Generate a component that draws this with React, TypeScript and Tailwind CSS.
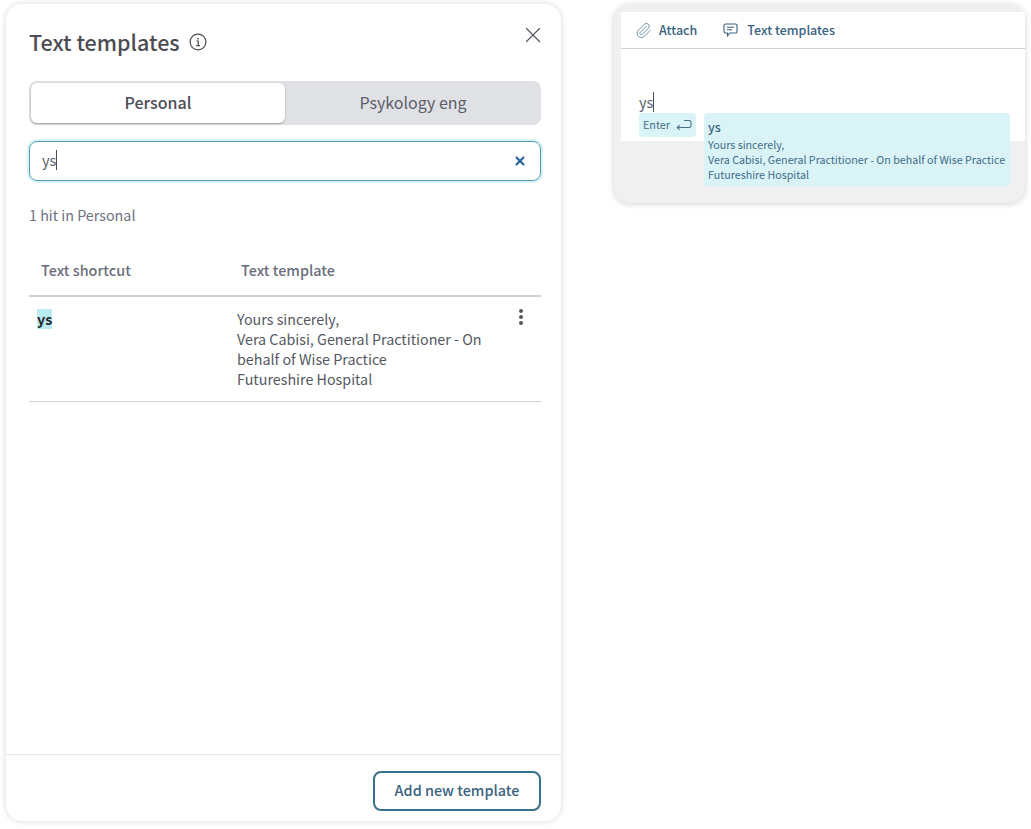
import { Paperclip, X } from "lucide-react";

const font = "font-['Noto_Sans_CJK_SC','Source_Sans_Pro',sans-serif]";

function Caret({ className }: { className: string }) {
  return <span className={`inline-block w-px bg-[#4b4f58] ${className}`} />;
}

function InfoIcon() {
  return (
    <svg viewBox="0 0 18 18" className="w-[18px] h-[18px] text-[#4c4d52]" fill="none" stroke="currentColor">
      <circle cx="9" cy="9" r="7.9" strokeWidth="1.2" />
      <path d="M7.4 8h1.8v4.6M7.2 12.6h3.8" strokeWidth="1.2" />
      <circle cx="8.9" cy="5.6" r="0.9" fill="currentColor" stroke="none" />
    </svg>
  );
}

function EnterIcon() {
  return (
    <svg viewBox="0 0 16 12" className="w-4 h-3" fill="none" stroke="currentColor" strokeWidth="1.1">
      <path d="M8 1.5h5.2a1.8 1.8 0 0 1 1.8 1.8v3.4a1.8 1.8 0 0 1-1.8 1.8H1.2M3.8 6.2 1.2 8.5l2.6 2.3" />
    </svg>
  );
}

function BubbleIcon() {
  return (
    <svg viewBox="0 0 15 14" className="w-[15px] h-[14px]" fill="none" stroke="currentColor" strokeWidth="1.1">
      <path d="M2.5 1h10A1.5 1.5 0 0 1 14 2.500v6A1.500 1.500 0 0 1 12.500 10H7l-2.500 2.800V10h-2A1.500 1.500 0 0 1 1 8.500v-6A1.500 1.500 0 0 1 2.500 1Z" />
      <path d="M4 4.200h7M4 6.800h5" />
    </svg>
  );
}

function TemplatesPanel() {
  return (
    <div className="w-[555px] h-[817px] flex flex-col bg-white rounded-2xl shadow-[0_0_6px_rgba(0,0,0,0.16)]">
      <div className="flex-1 pl-[23px] pr-5">
        {/* Title */}
        <div className="relative h-[77px] pt-6">
          <div className="flex items-center gap-[9px] h-7">
            <h1 className="text-[21.5px] leading-7 font-medium text-[#4c4d52]">Text templates</h1>
            <InfoIcon />
          </div>
          <X className="absolute right-[-5px] top-[18px] w-[26px] h-[26px] text-[#55565b]" strokeWidth={1.1} />
        </div>

        {/* Tabs */}
        <div className="flex h-11 bg-[#e0e1e5] rounded-lg p-[2px] pr-0">
          <div className="w-[254px] flex items-center justify-center pb-[2px] bg-white rounded-md shadow-[0_1px_2px_rgba(0,0,0,0.3)] text-[16px] font-medium text-[#4c4d57]">
            Personal
          </div>
          <div className="flex-1 flex items-center justify-center pb-[2px] text-[16px] text-[#5c5f6a]">
            Psykology eng
          </div>
        </div>

        {/* Search */}
        <div className="mt-4 h-10 flex items-center justify-between pl-3 pr-[13px] rounded-lg border border-[#4a9db3] shadow-[0_0_0_2px_#d9f3f7]">
          <div className="flex items-center pb-[2px] text-[14.5px] text-[#5c5f6a]">
            ys
            <Caret className="h-5" />
          </div>
          <X className="w-[14px] h-[14px] text-[#23609a]" strokeWidth={3.5} />
        </div>

        <p className="mt-6 text-[14.3px] leading-5 text-[#6d7180]">1 hit in Personal</p>

        {/* Table */}
        <div className="mt-[34px] flex h-[22px] text-[14.4px] leading-[22px] font-medium text-[#6a6e7c]">
          <div className="w-[200px] pl-3">Text shortcut</div>
          <div className="pl-3">Text template</div>
        </div>
        <div className="mt-[14px] border-t-2 border-[#cfd0d5]" />
        <div className="flex h-[105px] pt-3 border-b border-[#d3d4d8] text-[14.3px] leading-5">
          <div className="w-[200px] pl-2">
            <span className="inline-block bg-[#b9ebf1] font-semibold text-[#26272b]">ys</span>
          </div>
          <div className="w-[262px] pl-2 text-[#55575f]">
            Yours sincerely,
            <br />
            Vera Cabisi, General Practitioner - On behalf of Wise Practice
            <br />
            Futureshire Hospital
          </div>
          <div className="flex flex-col gap-[2px] ml-[28px]">
            <span className="w-1 h-1 rounded-full bg-[#55575f]" />
            <span className="w-1 h-1 rounded-full bg-[#55575f]" />
            <span className="w-1 h-1 rounded-full bg-[#55575f]" />
          </div>
        </div>
      </div>

      {/* Footer */}
      <div className="h-[67px] flex items-start justify-end pt-4 pr-5 border-t border-[#e6e6e9]">
        <button className="w-[168px] h-10 pb-[2px] rounded-lg border-2 border-[#36708f] text-[14.4px] font-medium text-[#3a6280] bg-white">
          Add new template
        </button>
      </div>
    </div>
  );
}

function ComposerPreview() {
  return (
    <div className="w-[411px] h-[199px] ml-[53px] pt-2 pl-[7px] bg-[#f0f0f0] rounded-2xl shadow-[0_1px_6px_rgba(0,0,0,0.18)]">
      <div className="relative h-[129px] bg-white">
        <div className="h-[37px] flex items-center pl-[14px] border-b border-[#d2d3d8] text-[12.5px] font-medium text-[#3a6280]">
          <Paperclip className="w-[17px] h-[17px] text-[#4a7590] mr-[7px]" strokeWidth={1.1} />
          Attach
          <span className="ml-[26px] mr-[9px]"><BubbleIcon /></span>
          Text templates
        </div>
        <div className="flex items-center h-5 pl-[18px] mt-[43px] text-[14.5px] text-[#5c5f6a]">
          ys
          <Caret className="h-5" />
        </div>
        {/* Suggestion overlay */}
        <div className="absolute left-[18px] top-[101px] w-[57px] h-6 flex items-center pl-1 bg-[#d9f3f7] rounded text-[10.8px] text-[#4a6f87]">
          <span className="pb-[2px]">Enter</span>
          <span className="ml-[6px]"><EnterIcon /></span>
        </div>
        <div className="absolute left-[83px] top-[101px] w-[306px] h-[73px] pt-[5px] pl-1 bg-[#d9f3f7] rounded text-[10.7px] leading-[15px] text-[#3f6c87] whitespace-nowrap">
          <div className="text-[12.5px] leading-[17px] font-medium text-[#3a6280]">ys</div>
          <div className="mt-[2px]">Yours sincerely,</div>
          <div>Vera Cabisi, General Practitioner - On behalf of Wise Practice</div>
          <div>Futureshire Hospital</div>
        </div>
      </div>
    </div>
  );
}

export default function App() {
  return (
    <div className={`${font} w-[1031px] h-[829px] flex items-start pt-1 pl-[6px] bg-white overflow-hidden`}>
      <TemplatesPanel />
      <ComposerPreview />
    </div>
  );
}
